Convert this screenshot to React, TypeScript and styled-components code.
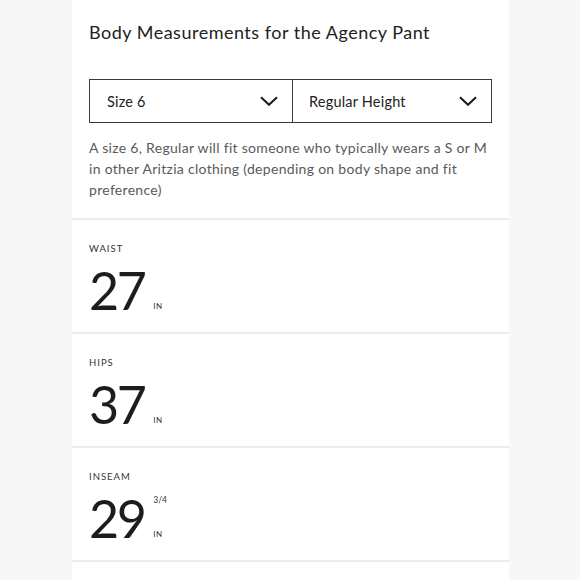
import React from "react";
import styled, { createGlobalStyle } from "styled-components";

const Global = createGlobalStyle`
  html, body { margin: 0; padding: 0; background: #f7f7f7; }
  body { font-family: Lato, "Noto Sans", sans-serif; color: #1f1f1f; }
`;

const Page = styled.div`
  display: flex;
  padding-left: 72px;
  min-height: 580px;
`;

const Panel = styled.main`
  width: 437px;
  background: #ffffff;
  display: flex;
  flex-direction: column;
`;

const Header = styled.section`
  padding: 20px 17px 18px 17px;
  border-bottom: 2px solid #ececec;
`;

const Title = styled.h1`
  margin: 0;
  font-size: 18px;
  line-height: 24px;
  font-weight: 400;
  letter-spacing: 0.5px;
  color: #222;
`;

const SelectRow = styled.div`
  margin-top: 35px;
  display: grid;
  grid-template-columns: 202px 1fr;
  border: 1.5px solid #3a3a3a;
  height: 44px;
  box-sizing: border-box;
`;

const SelectCell = styled.div<{ $divider?: boolean }>`
  display: flex;
  align-items: center;
  justify-content: space-between;
  padding: 0 14px 0 ${(p) => (p.$divider ? "16px" : "17px")};
  font-size: 14.5px;
  letter-spacing: 0.2px;
  color: #222;
  border-left: ${(p) => (p.$divider ? "1.5px solid #3a3a3a" : "none")};
`;

const Chevron = () => (
  <svg width="18" height="10" viewBox="0 0 18 10" fill="none">
    <path d="M1 1.2 L9 8.8 L17 1.2" stroke="#1a1a1a" strokeWidth="2" />
  </svg>
);

const Description = styled.p`
  margin: 14px 0 0 0;
  font-size: 14px;
  line-height: 21px;
  letter-spacing: 0.3px;
  color: #5a5a5a;
`;

const Measure = styled.section`
  height: 114px;
  box-sizing: border-box;
  padding: 23px 17px 0 17px;
  border-bottom: 2px solid #ececec;
`;

const Label = styled.div`
  font-size: 9.5px;
  letter-spacing: 1px;
  text-transform: uppercase;
  color: #333;
  line-height: 12px;
`;

const ValueRow = styled.div`
  display: flex;
  align-items: flex-end;
  margin-top: 12px;
`;

const Number = styled.span`
  font-size: 52px;
  line-height: 46px;
  font-weight: 400;
  color: #1d1d1d;
  letter-spacing: -2.5px;
`;

const Side = styled.div`
  display: flex;
  flex-direction: column;
  justify-content: space-between;
  align-self: stretch;
  margin-left: 9px;
  padding-bottom: 2px;
`;

const Fraction = styled.span`
  font-size: 8.5px;
  color: #333;
  line-height: 10px;
`;

const Unit = styled.span`
  font-size: 8px;
  letter-spacing: 0.5px;
  color: #333;
  line-height: 10px;
`;

const data = [
  { label: "Waist", value: "27", frac: "" },
  { label: "Hips", value: "37", frac: "" },
  { label: "Inseam", value: "29", frac: "3/4" },
];

export default function App() {
  return (
    <Page>
      <Global />
      <Panel>
        <Header>
          <Title>Body Measurements for the Agency Pant</Title>
          <SelectRow>
            <SelectCell>
              <span>Size 6</span>
              <Chevron />
            </SelectCell>
            <SelectCell $divider>
              <span>Regular Height</span>
              <Chevron />
            </SelectCell>
          </SelectRow>
          <Description>
            A size 6, Regular will fit someone who typically wears a S or M in other Aritzia
            clothing (depending on body shape and fit preference)
          </Description>
        </Header>
        {data.map((m) => (
          <Measure key={m.label}>
            <Label>{m.label}</Label>
            <ValueRow>
              <Number>{m.value}</Number>
              <Side>
                <Fraction>{m.frac}</Fraction>
                <Unit>IN</Unit>
              </Side>
            </ValueRow>
          </Measure>
        ))}
      </Panel>
    </Page>
  );
}
